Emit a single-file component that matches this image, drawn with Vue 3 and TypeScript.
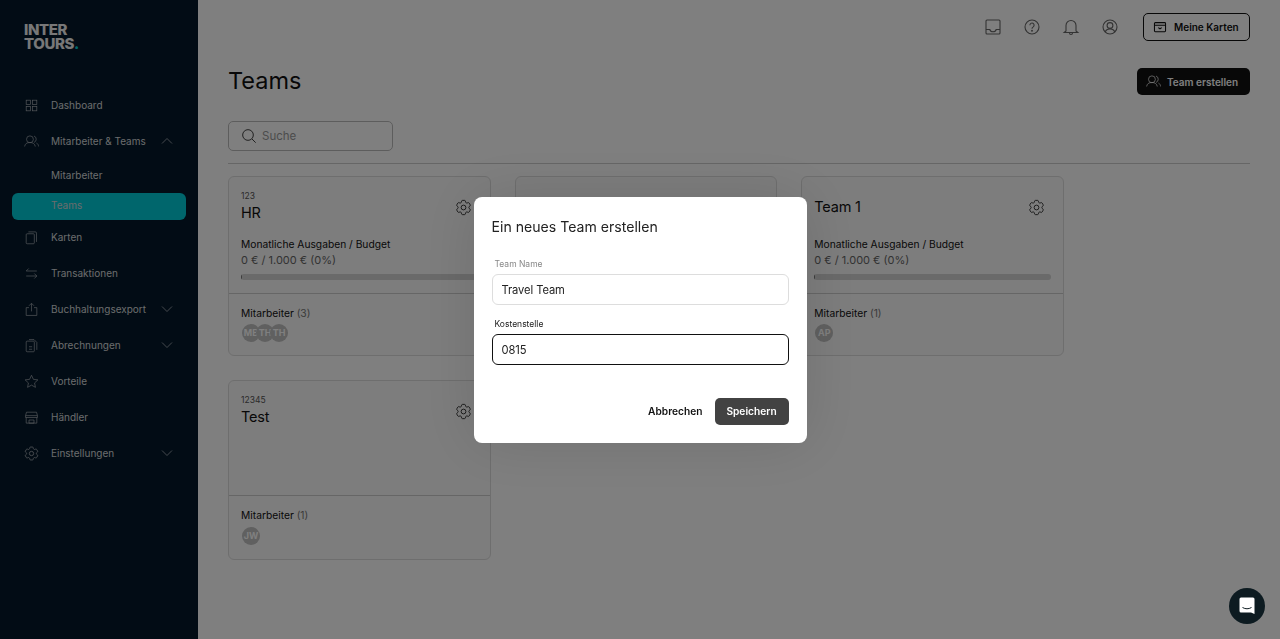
<script setup lang="ts">
interface Team {
  id: string
  code?: string
  name?: string
  budget: boolean
  members: string[]
}
const teams: Team[] = [
  { id: 'hr', code: '123', name: 'HR', budget: true, members: ['MB', 'TH', 'TH'] },
  { id: 'covered', budget: false, members: [] },
  { id: 't1', name: 'Team 1', budget: true, members: ['AP'] },
  { id: 'test', code: '12345', name: 'Test', budget: false, members: ['JW'] },
]
const nav = [
  { label: 'Dashboard', icon: 'grid' },
  { label: 'Mitarbeiter & Teams', icon: 'users', chevron: 'up' },
  { label: 'Mitarbeiter', sub: true },
  { label: 'Teams', sub: true, active: true },
  { label: 'Karten', icon: 'cards' },
  { label: 'Transaktionen', icon: 'swap' },
  { label: 'Buchhaltungsexport', icon: 'share', chevron: 'down' },
  { label: 'Abrechnungen', icon: 'docs', chevron: 'down' },
  { label: 'Vorteile', icon: 'star' },
  { label: 'Händler', icon: 'store' },
  { label: 'Einstellungen', icon: 'gear', chevron: 'down' },
]
const gearPath = 'M9.594 3.94c.09-.542.56-.94 1.11-.94h2.593c.55 0 1.02.398 1.11.94l.213 1.281c.063.374.313.686.645.87.074.04.147.083.22.127.325.196.72.257 1.075.124l1.217-.456a1.125 1.125 0 0 1 1.37.49l1.296 2.247a1.125 1.125 0 0 1-.26 1.431l-1.003.827c-.293.241-.438.613-.43.992a7.723 7.723 0 0 1 0 .255c-.008.378.137.75.43.991l1.004.827c.424.35.534.955.26 1.43l-1.298 2.247a1.125 1.125 0 0 1-1.369.491l-1.217-.456c-.355-.133-.75-.072-1.076.124a6.47 6.47 0 0 1-.22.128c-.331.183-.581.495-.644.869l-.213 1.281c-.09.543-.56.94-1.11.94h-2.594c-.55 0-1.019-.398-1.11-.94l-.213-1.281c-.062-.374-.312-.686-.644-.87a6.52 6.52 0 0 1-.22-.127c-.325-.196-.72-.257-1.076-.124l-1.217.456a1.125 1.125 0 0 1-1.369-.49l-1.297-2.247a1.125 1.125 0 0 1 .26-1.431l1.004-.827c.292-.24.437-.613.43-.991a6.932 6.932 0 0 1 0-.255c.007-.38-.138-.751-.43-.992l-1.004-.827a1.125 1.125 0 0 1-.26-1.43l1.297-2.247a1.125 1.125 0 0 1 1.37-.491l1.216.456c.356.133.751.072 1.076-.124.072-.044.146-.086.22-.128.332-.183.582-.495.644-.869l.214-1.28Z'
</script>

<template>
  <div class="app">
    <aside class="sidebar">
      <div class="logo">INTER<br />TOURS<span class="dot">.</span></div>
      <nav class="nav">
        <a
          v-for="item in nav"
          :key="item.label"
          class="nav-row"
          :class="{ sub: item.sub, active: item.active }"
        >
          <svg v-if="item.icon" class="nav-icon" viewBox="0 0 24 24" fill="none" stroke="currentColor" stroke-width="1.100">
            <template v-if="item.icon === 'grid'">
              <rect x="3.500" y="3.500" width="7" height="7" /><rect x="13.500" y="3.500" width="7" height="7" />
              <rect x="3.500" y="13.500" width="7" height="7" /><rect x="13.500" y="13.500" width="7" height="7" />
            </template>
            <template v-else-if="item.icon === 'users'">
              <circle cx="9.500" cy="8.500" r="5.500" />
              <path d="M1 20c.5-4 3.500-6.500 8.500-6.500s8 2.500 8.500 6.500" />
              <path d="M16 3.200a5.500 5.500 0 0 1 0 10.300M20 14.500c1.900.9 3 2.800 3.500 5.500" />
            </template>
            <template v-else-if="item.icon === 'cards'">
              <rect x="3.500" y="6" width="13" height="16" rx="1.500" />
              <path d="M7 3h11a2 2 0 0 1 2 2v14" />
            </template>
            <template v-else-if="item.icon === 'swap'">
              <path d="M3.500 8h17M7.500 4l-4 4M3.500 16h17M16.500 12l4 4 -4 4" />
            </template>
            <template v-else-if="item.icon === 'share'">
              <path d="M8 9H3.500v12.500h17V9H16M12 15V2.500M8 6l4-4 4 4" />
            </template>
            <template v-else-if="item.icon === 'docs'">
              <rect x="3.500" y="5" width="13" height="17" rx="1.500" />
              <path d="M8 2.500h8l4.500 4.500v12M8 14h5M8 18h5" />
            </template>
            <template v-else-if="item.icon === 'star'">
              <path d="M12 2l3 6.500 7.200.9-5.300 4.900 1.400 7-6.300-3.500-6.300 3.500 1.400-7L1.800 9.400 9 8.500z" />
            </template>
            <template v-else-if="item.icon === 'store'">
              <path d="M2.500 9l1.500-5.500h16L21.500 9M2.500 9h19v3h-19zM3.500 12v9h17v-9M8 16h8v5H8z" />
            </template>
            <template v-else-if="item.icon === 'gear'">
              <g transform="translate(-1.800 -1.800) scale(1.150)"><path :d="gearPath" /><circle cx="12" cy="12" r="3" /></g>
            </template>
          </svg>
          <span class="nav-label">{{ item.label }}</span>
          <svg v-if="item.chevron" class="chev" viewBox="0 0 12 8" fill="none" stroke="currentColor" stroke-width="0.800">
            <path :d="item.chevron === 'up' ? 'M1 6.500 6 1.500l5 5' : 'M1 1.500l5 5 5-5'" />
          </svg>
        </a>
      </nav>
    </aside>

    <main class="main">
      <header class="topbar">
        <svg class="top-icon" viewBox="0 0 18 18" fill="none" stroke="currentColor" stroke-width="1.100">
          <rect x="2" y="2" width="14" height="14" rx="1" />
          <path d="M2 11.500h3.800c.4 1.500 1.500 2.300 3.200 2.300s2.800-.8 3.200-2.300H16" />
        </svg>
        <svg class="top-icon" viewBox="0 0 18 18" fill="none" stroke="currentColor" stroke-width="1.100">
          <circle cx="9" cy="9" r="7" />
          <path d="M6.900 7.200a2.100 2.100 0 1 1 3.300 1.700c-.8.500-1.200 1-1.200 1.900" />
          <circle cx="9" cy="12.800" r=".4" />
        </svg>
        <svg class="top-icon" viewBox="0 0 18 18" fill="none" stroke="currentColor" stroke-width="1.100">
          <path d="M4 13V7.500a5 5 0 0 1 10 0V13l1.800 1.500H2.200zM7.500 15a1.500 1.500 0 0 0 3 0" />
        </svg>
        <svg class="top-icon" viewBox="0 0 18 18" fill="none" stroke="currentColor" stroke-width="1.100">
          <circle cx="9" cy="9" r="7" />
          <circle cx="9" cy="7.500" r="2.900" />
          <path d="M4.100 14.200c.8-2.200 2.700-3.300 4.900-3.300s4.100 1.100 4.900 3.300" />
        </svg>
        <button class="btn-outline">
          <svg class="btn-icon" viewBox="0 0 24 24" fill="none" stroke="currentColor" stroke-width="1.800">
            <rect x="2.500" y="4.500" width="19" height="15.500" rx="1.500" />
            <path d="M2.500 9h19M9 13l3 2 3-2" />
          </svg>
          Meine Karten
        </button>
      </header>

      <div class="title-row">
        <h1>Teams</h1>
        <button class="btn-dark">
          <svg class="btn-icon wide" viewBox="0 0 24 24" fill="none" stroke="currentColor" stroke-width="1.100">
            <circle cx="9.500" cy="8.500" r="5.500" />
            <path d="M1 20c.5-4 3.500-6.500 8.500-6.500s8 2.500 8.500 6.500" />
            <path d="M16 3.200a5.500 5.500 0 0 1 0 10.300M20 14.500c1.900.9 3 2.800 3.500 5.500" />
          </svg>
          <span class="dark-label">Team erstellen</span>
        </button>
      </div>

      <div class="search">
        <svg class="search-icon" viewBox="0 0 24 24" fill="none" stroke="currentColor" stroke-width="1.400">
          <circle cx="10.500" cy="10.500" r="8" /><path d="M16.500 16.500l5.500 5.500" />
        </svg>
        <span>Suche</span>
      </div>
      <div class="divider"></div>

      <section class="cards">
        <article v-for="t in teams" :key="t.id" class="card" :class="{ plain: !t.budget }">
          <template v-if="t.name">
            <div class="card-top">
              <div class="card-head">
                <div class="head-text" :class="{ solo: !t.code }">
                  <div v-if="t.code" class="code">{{ t.code }}</div>
                  <div class="name">{{ t.name }}</div>
                </div>
                <svg class="gear" viewBox="0 0 24 24" fill="none" stroke="currentColor" stroke-width="1.200">
                  <path :d="gearPath" /><circle cx="12" cy="12" r="3" />
                </svg>
              </div>
              <template v-if="t.budget">
                <div class="budget-label">Monatliche Ausgaben / Budget</div>
                <div class="budget-value">0 € / 1.000 € (0%)</div>
                <div class="bar"><div class="bar-fill"></div></div>
              </template>
            </div>
            <div class="card-bottom">
              <div class="members">Mitarbeiter <span>({{ t.members.length }})</span></div>
              <div class="avatars">
                <span v-for="(m, i) in t.members" :key="i" class="avatar">{{ m }}</span>
              </div>
            </div>
          </template>
        </article>
      </section>
    </main>

    <div class="overlay">
      <div class="modal">
        <h2>Ein neues Team erstellen</h2>
        <label class="lbl muted">Team Name</label>
        <div class="input">Travel Team</div>
        <label class="lbl second">Kostenstelle</label>
        <div class="input focus">0815</div>
        <div class="actions">
          <button class="cancel">Abbrechen</button>
          <button class="save">Speichern</button>
        </div>
      </div>
    </div>

    <button class="chat" aria-label="Chat">
      <svg viewBox="0 0 18 20" width="18" height="20">
        <path d="M3 1.500h12a1.500 1.500 0 0 1 1.500 1.500v15l-3.500-1.500H3A1.500 1.500 0 0 1 1.500 15V3A1.500 1.500 0 0 1 3 1.500z" fill="#fff" />
        <path d="M4.500 11.500c3 1.700 6 1.700 9 0" fill="none" stroke="#0d1b21" stroke-width="1" />
      </svg>
    </button>
  </div>
</template>

<style>
html, body { margin: 0; background: #fff; }
</style>

<style scoped>
.app {
  display: flex;
  height: 639px;
  overflow: hidden;
  font-family: Inter, "Liberation Sans", sans-serif;
  color: #111;
  background: #fff;
}
.sidebar {
  width: 198px;
  flex: none;
  background: #04192b;
  color: #d6d8da;
  display: flex;
  flex-direction: column;
}
.logo {
  margin: 23px 0 0 24px;
  font-size: 15px;
  line-height: 14px;
  font-weight: 800;
  letter-spacing: -0.4px;
  color: #f0f0f0;
  height: 64px;
}
.dot { color: #00d0d8; }
.nav { display: flex; flex-direction: column; }
.nav-row {
  display: flex;
  align-items: center;
  height: 36px;
  padding-left: 24px;
  font-size: 10px;
}
.nav-row.sub {
  height: 29px;
  padding: 3px 0 0 51px;
  box-sizing: border-box;
}
.nav-row.active {
  height: 27px;
  margin: 5px 12px -1px;
  padding: 0 0 3px 39px;
  background: #00cdd8;
  border-radius: 6px;
}
.nav-icon { width: 15px; height: 15px; margin-right: 12px; flex: none; opacity: 0.8; }
.nav-label { flex: 1; white-space: nowrap; }
.chev { width: 12px; height: 8px; margin-right: 25px; flex: none; opacity: 0.8; }

.main {
  flex: 1;
  min-width: 0;
  padding: 0 30px;
}
.topbar {
  height: 54px;
  display: flex;
  align-items: center;
  justify-content: flex-end;
  gap: 21px;
  color: #666;
}
.top-icon { width: 18px; height: 18px; flex: none; }
button { font-family: inherit; cursor: pointer; }
.btn-outline {
  display: flex;
  align-items: center;
  gap: 7px;
  width: 107px;
  height: 28px;
  margin-left: 3px;
  padding: 0 0 0 9px;
  border: 1px solid #111;
  border-radius: 5px;
  background: transparent;
  color: #111;
  font-size: 10px;
  font-weight: 600;
}
.btn-icon { width: 14px; height: 14px; flex: none; }
.btn-icon.wide { width: 15px; height: 15px; }
.title-row {
  display: flex;
  align-items: center;
  justify-content: space-between;
  height: 28px;
  margin-top: 13px;
}
h1 { margin: 0; font-size: 23.500px; font-weight: 400; line-height: 28px; }
.btn-dark {
  display: flex;
  align-items: center;
  gap: 6px;
  width: 113px;
  height: 27px;
  padding: 0 0 0 9px;
  border: 0;
  border-radius: 5px;
  background: #111;
  color: #fff;
  font-size: 10px;
  font-weight: 600;
  white-space: nowrap;
}
.dark-label { padding-top: 2px; }
.search {
  display: flex;
  align-items: center;
  gap: 5px;
  box-sizing: border-box;
  width: 165px;
  height: 30px;
  margin-top: 26px;
  padding: 0 0 1px 12px;
  border: 1px solid #bbb;
  border-radius: 5px;
  font-size: 11.500px;
  color: #999;
}
.search-icon { width: 16px; height: 16px; color: #333; }
.divider { height: 1px; background: #ccc; margin-top: 12px; }
.cards {
  display: grid;
  grid-template-columns: repeat(3, 262.670px);
  column-gap: 24px;
  row-gap: 24px;
  margin-top: 12px;
}
.card {
  display: flex;
  flex-direction: column;
  height: 180px;
  box-sizing: border-box;
  border: 1px solid #ddd;
  border-radius: 6px;
  background: #fafafa;
}
.card-top { flex: 1; padding: 13px 12px 0; border-bottom: 1px solid #ccc; }
.card-head { display: flex; justify-content: space-between; align-items: center; height: 35px; }
.head-text.solo { padding-bottom: 2px; }
.code { font-size: 8.500px; line-height: 11px; color: #555; }
.name { font-size: 14.500px; line-height: 22px; color: #111; letter-spacing: -0.2px; }
.gear { width: 19px; height: 19px; margin-right: 5px; color: #333; flex: none; }
.budget-label { font-size: 10.250px; line-height: 16px; margin-top: 11px; color: #111; }
.budget-value { font-size: 11px; line-height: 16px; color: #666; }
.bar { height: 6px; border-radius: 3px; background: #d4d4d4; margin-top: 6px; overflow: hidden; }
.bar-fill { width: 1px; height: 100%; background: #777; }
.card-bottom { height: 61px; padding: 11px 12px 0; box-sizing: border-box; }
.plain .card-bottom { height: 63px; }
.members { font-size: 10.250px; line-height: 16px; color: #111; }
.members span { color: #777; }
.avatars { display: flex; margin-top: 3px; padding-left: 1px; }
.plain .avatars { margin-top: 4px; }
.avatar {
  width: 18px;
  height: 18px;
  border-radius: 50%;
  background: #c0c0c0;
  color: #fff;
  font-size: 9px;
  font-weight: 700;
  line-height: 18px;
  text-align: center;
  flex: none;
}
.avatar + .avatar { margin-left: -4px; }

.overlay {
  position: fixed;
  inset: 0;
  background: rgba(0, 0, 0, 0.5);
  display: flex;
  align-items: center;
  justify-content: center;
  z-index: 10;
}
.modal {
  box-sizing: border-box;
  width: 333px;
  height: 246px;
  padding: 20px 18px 18px;
  background: #fff;
  border-radius: 8px;
  display: flex;
  flex-direction: column;
  box-shadow: 0 0 60px rgba(0, 0, 0, 0.12);
}
h2 { margin: 0 0 22px; font-size: 14.100px; font-weight: 400; line-height: 20px; color: #222; }
.lbl { font-size: 8.500px; line-height: 11px; padding-left: 3px; color: #222; margin-bottom: 4px; }
.lbl.muted { color: #888; }
.lbl.second { margin-top: 14px; }
.input {
  box-sizing: border-box;
  height: 31px;
  padding: 1px 0 0 9px;
  border: 1px solid #ddd;
  border-radius: 6px;
  font-size: 11.200px;
  line-height: 29px;
  color: #222;
  letter-spacing: -0.1px;
}
.input.focus { border-color: #111; }
.actions { margin-top: auto; display: flex; justify-content: flex-end; align-items: center; gap: 12px; }
.cancel { border: 0; background: none; padding: 0; font-size: 10.200px; font-weight: 600; color: #111; }
.save {
  width: 74px;
  height: 27px;
  border: 0;
  border-radius: 5px;
  background: #424242;
  color: #fff;
  font-size: 10.200px;
  font-weight: 600;
}
.chat {
  position: fixed;
  right: 15px;
  bottom: 15px;
  width: 36px;
  height: 36px;
  padding: 0;
  border: 0;
  border-radius: 50%;
  background: #0d1b21;
  display: flex;
  align-items: center;
  justify-content: center;
  z-index: 20;
}
</style>
